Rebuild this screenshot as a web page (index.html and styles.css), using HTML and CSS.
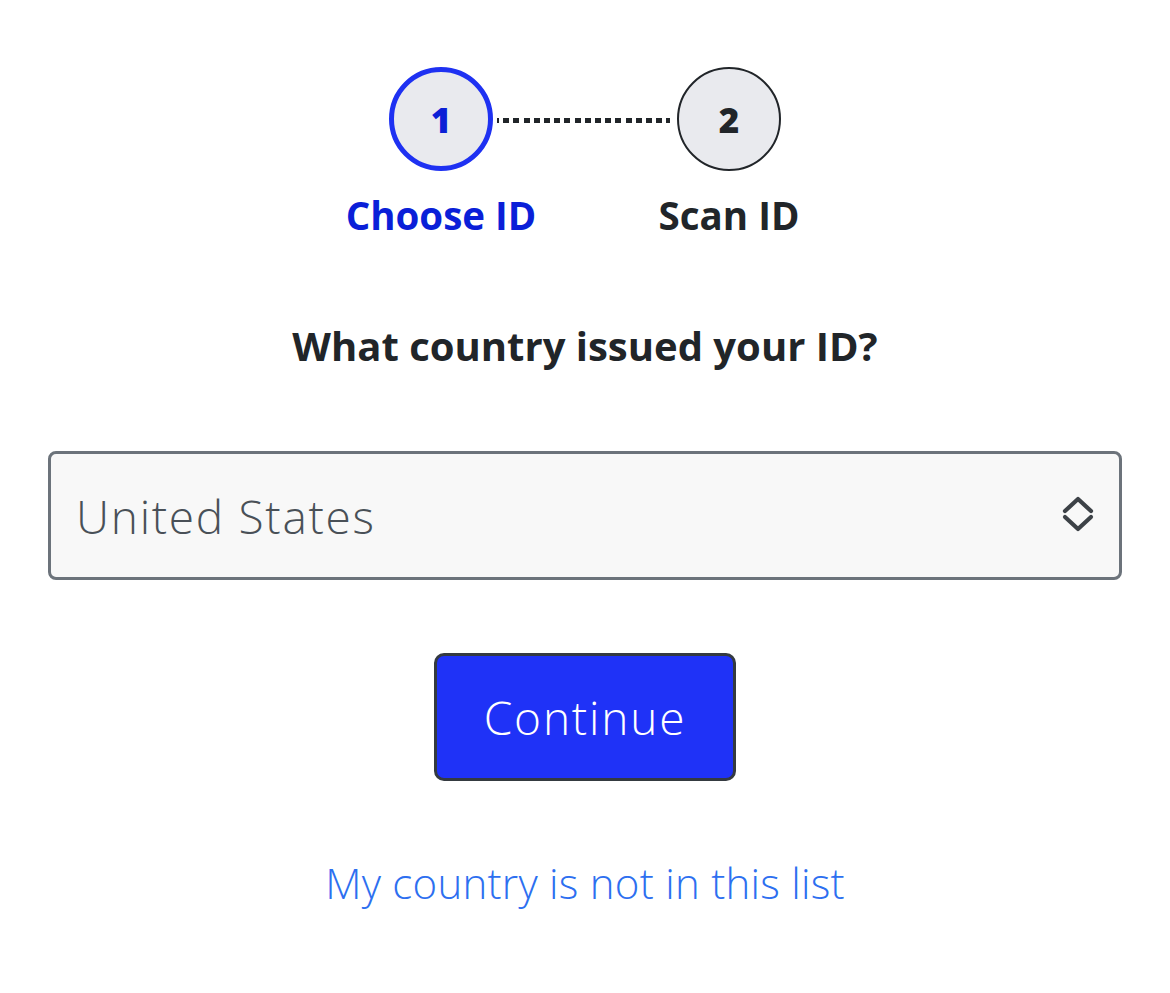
FILE: index.html
```html
<!DOCTYPE html>
<html lang="en">
<head>
<meta charset="utf-8">
<title>Choose ID</title>
<link rel="stylesheet" href="styles.css">
</head>
<body>
<main class="page">
  <div class="stepper">
    <div class="step step-active">
      <div class="circle">1</div>
      <div class="label">Choose ID</div>
    </div>
    <div class="connector"></div>
    <div class="step">
      <div class="circle">2</div>
      <div class="label">Scan ID</div>
    </div>
  </div>

  <h1 class="question">What country issued your ID?</h1>

  <div class="select">
    <span class="select-value">United States</span>
    <svg class="select-icon" width="34" height="38" viewBox="0 0 34 38" aria-hidden="true">
      <path d="M4 16 L17 4 L30 16" fill="none" stroke="#3d4247" stroke-width="4.2" stroke-linecap="round" stroke-linejoin="round"/>
      <path d="M4 22 L17 34 L30 22" fill="none" stroke="#3d4247" stroke-width="4.2" stroke-linecap="round" stroke-linejoin="round"/>
    </svg>
  </div>

  <button class="btn-continue" type="button">Continue</button>

  <a class="link" href="#">My country is not in this list</a>
</main>
</body>
</html>
```
FILE: styles.css
```css
* { box-sizing: border-box; }

html, body {
  margin: 0;
  padding: 0;
  background: #ffffff;
}

body {
  font-family: "Open Sans", "Noto Sans", sans-serif;
  color: #212529;
}

.page {
  display: flex;
  flex-direction: column;
  align-items: center;
  padding: 67px 48px 0 48px;
}

.stepper {
  display: flex;
  align-items: flex-start;
}

.step {
  width: 104px;
  display: flex;
  flex-direction: column;
  align-items: center;
}

.circle {
  width: 104px;
  height: 104px;
  border-radius: 50%;
  background: #e9eaee;
  border: 2.5px solid #212529;
  display: flex;
  align-items: center;
  justify-content: center;
  font-size: 35px;
  font-weight: 800;
  color: #212529;
  line-height: 1;
}

.step-active .circle {
  border: 5px solid #1e31f2;
  color: #0c20d6;
}

.label {
  margin-top: 20px;
  white-space: nowrap;
  font-size: 38.5px;
  font-weight: 700;
  line-height: 48px;
  color: #212529;
}

.step-active .label {
  color: #0a1fd8;
}

.connector {
  width: 184px;
  height: 5px;
  margin-top: 51px;
  background: repeating-linear-gradient(90deg, #212529 0 6px, transparent 6px 10.2px);
  background-clip: content-box;
  padding: 0 7px 0 4px;
}

.question {
  margin: 79px 0 0 0;
  font-size: 40px;
  font-weight: 700;
  line-height: 56px;
  color: #212529;
}

.select {
  margin-top: 77px;
  width: 100%;
  height: 129px;
  border: 3px solid #6c737b;
  border-radius: 8px;
  background: #f8f8f8;
  display: flex;
  align-items: center;
  justify-content: space-between;
  padding: 0 24px 0 25px;
}

.select-value {
  font-size: 46px;
  font-weight: 300;
  letter-spacing: 1.7px;
  color: #495057;
  line-height: 1;
}

.select-icon {
  display: block;
  margin-top: -4px;
}

.btn-continue {
  margin-top: 73px;
  width: 302px;
  height: 128px;
  border: 3px solid #343a40;
  border-radius: 10px;
  background: #1f32f7;
  color: #ffffff;
  font-family: "Open Sans", "Noto Sans", sans-serif;
  font-size: 46px;
  font-weight: 300;
  letter-spacing: 1.8px;
  padding: 0;
  cursor: pointer;
}

.link {
  margin-top: 74px;
  font-size: 42px;
  font-weight: 300;
  letter-spacing: 0.25px;
  line-height: 56px;
  color: #2d6ff0;
  text-decoration: none;
}
```
